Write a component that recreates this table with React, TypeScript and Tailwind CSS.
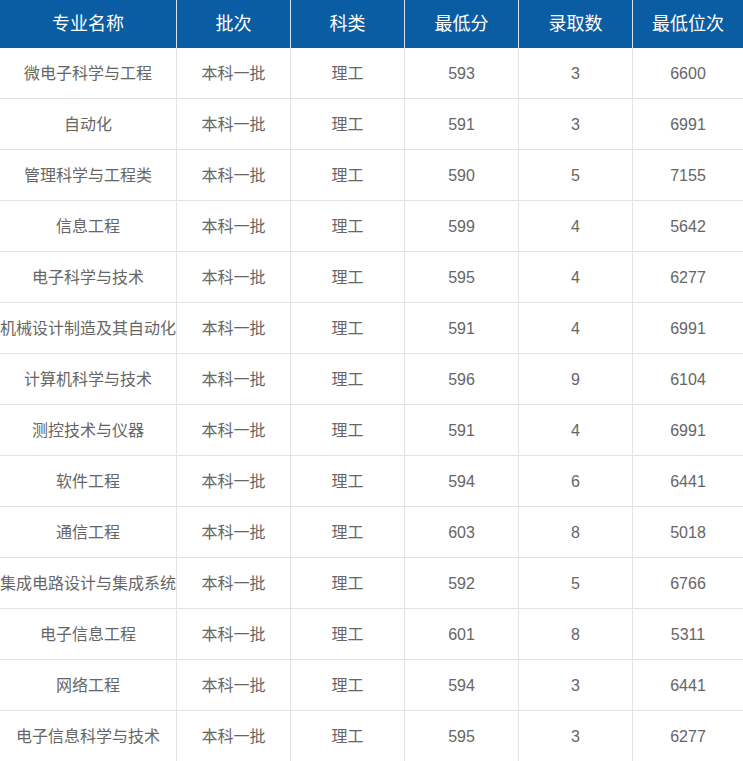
const HEAD = ["专业名称", "批次", "科类", "最低分", "录取数", "最低位次"];

const ROWS: [string, string, string, number, number, number][] = [
  ["微电子科学与工程", "本科一批", "理工", 593, 3, 6600],
  ["自动化", "本科一批", "理工", 591, 3, 6991],
  ["管理科学与工程类", "本科一批", "理工", 590, 5, 7155],
  ["信息工程", "本科一批", "理工", 599, 4, 5642],
  ["电子科学与技术", "本科一批", "理工", 595, 4, 6277],
  ["机械设计制造及其自动化", "本科一批", "理工", 591, 4, 6991],
  ["计算机科学与技术", "本科一批", "理工", 596, 9, 6104],
  ["测控技术与仪器", "本科一批", "理工", 591, 4, 6991],
  ["软件工程", "本科一批", "理工", 594, 6, 6441],
  ["通信工程", "本科一批", "理工", 603, 8, 5018],
  ["集成电路设计与集成系统", "本科一批", "理工", 592, 5, 6766],
  ["电子信息工程", "本科一批", "理工", 601, 8, 5311],
  ["网络工程", "本科一批", "理工", 594, 3, 6441],
  ["电子信息科学与技术", "本科一批", "理工", 595, 3, 6277],
];

const WIDTHS = ["w-[177px]", "w-[114px]", "w-[114px]", "w-[114px]", "w-[114px]", "w-[110px]"];

export default function App() {
  return (
    <div
      className="w-[743px] h-[761px] overflow-hidden bg-white"
      style={{ fontFamily: '"Liberation Sans", "Noto Sans CJK SC", sans-serif' }}
    >
      <div className="flex h-[48px] bg-[#0a5da2] text-white text-[18px]">
        {HEAD.map((h, i) => (
          <div
            key={h}
            className={`${WIDTHS[i]} shrink-0 flex items-center justify-center ${i < 5 ? "border-r border-[#d7e3ee]" : ""}`}
          >
            {h}
          </div>
        ))}
      </div>
      {ROWS.map((r) => (
        <div key={r[0]} className="flex h-[51px] border-b border-[#e3e3e3] text-[16px] text-[#666666]">
          {r.map((c, i) => (
            <div
              key={i}
              className={`${WIDTHS[i]} shrink-0 flex items-center justify-center pt-[2px] whitespace-nowrap overflow-visible ${i < 5 ? "border-r border-[#e3e3e3]" : ""}`}
            >
              {c}
            </div>
          ))}
        </div>
      ))}
    </div>
  );
}
